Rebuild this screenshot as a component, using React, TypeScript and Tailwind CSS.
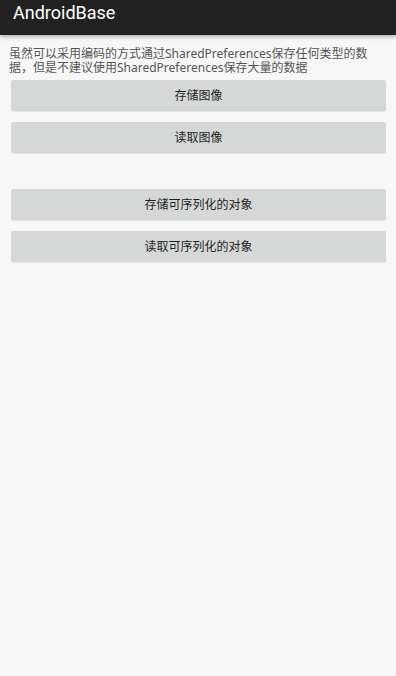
import React from "react";

const font = { fontFamily: '"Roboto", "Noto Sans CJK SC", sans-serif' };
const bodyFont = { fontFamily: '"Noto Sans", "Noto Sans CJK SC", sans-serif' };

function Btn({ label }: { label: string }) {
  return (
    <div className="h-[31px] rounded-[2px] bg-[#d6d7d7] flex items-center justify-center text-[12px] text-[#1f1f1f] shadow-[0_1px_1px_rgba(0,0,0,0.08)]">
      {label}
    </div>
  );
}

export default function App() {
  return (
    <div className="w-[396px] h-[676px] bg-[#f7f7f7] flex flex-col overflow-hidden" style={font}>
      <div className="h-[35px] bg-[#212121] flex items-center pl-[13px] pb-[10px] pt-[1px] shadow-[0_2px_4px_rgba(0,0,0,0.3)] z-10">
        <span className="text-white text-[18px] leading-none">AndroidBase</span>
      </div>
      <div className="px-[9px] pt-[12px] text-[12px] leading-[14px] text-[#555555]" style={bodyFont}>
        虽然可以采用编码的方式通过SharedPreferences保存任何类型的数据，但是不建议使用SharedPreferences保存大量的数据
      </div>
      <div className="flex flex-col gap-[11px] px-[11px] pr-[10px] mt-[5px]">
        <Btn label="存储图像" />
        <Btn label="读取图像" />
      </div>
      <div className="flex flex-col gap-[11px] px-[11px] pr-[10px] mt-[36px]">
        <Btn label="存储可序列化的对象" />
        <Btn label="读取可序列化的对象" />
      </div>
    </div>
  );
}
